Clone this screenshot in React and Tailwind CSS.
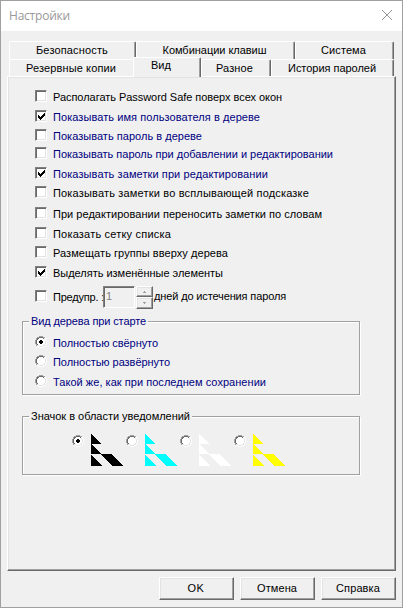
import { useLayoutEffect, useRef } from 'react';

// Text run spread to an exact width through letter spacing.
function Label({ w, className = '', children }) {
  const ref = useRef(null);
  useLayoutEffect(() => {
    const el = ref.current;
    el.style.letterSpacing = '0px';
    const natural = el.getBoundingClientRect().width;
    el.style.letterSpacing = `${(w - natural) / el.textContent.length}px`;
  }, [w]);
  return (
    <span ref={ref} className={`inline-block shrink-0 whitespace-pre ${className}`}>
      {children}
    </span>
  );
}

const sunken =
  'border border-t-[#808080] border-l-[#808080] border-b-white border-r-white';
const raised =
  'border border-t-white border-l-white border-b-[#696969] border-r-[#696969] shadow-[inset_-1px_-1px_0_#a0a0a0,inset_1px_1px_0_#e3e3e3]';

function Check({ on }) {
  return (
    <span className={`block h-3 w-3 shrink-0 bg-white ${sunken} shadow-[inset_1px_1px_0_#696969,inset_-1px_-1px_0_#e3e3e3]`}>
      {on && (
        <svg className="block h-[10px] w-[10px]" viewBox="0 0 10 10" shapeRendering="crispEdges">
          <path d="M2 4h1v1h1v1h1v-1h1v-1h1v-1h1v-1h1v3h-1v1h-1v1h-1v1h-1v1h-1v-1h-1v-1h-1z" />
        </svg>
      )}
    </span>
  );
}

function Radio({ on }) {
  return (
    <svg className="block h-3 w-3 shrink-0" viewBox="0 0 12 12" shapeRendering="crispEdges">
      <path d="M4 1h4v1h2v2h1v4h-1v2h-2v1h-4v-1h-2v-2h-1v-4h1v-2h2z" fill="#fff" />
      <path d="M4 0h4v1h-4zM2 1h2v1h-2zM8 1h2v1h-2zM1 2h1v2h-1zM0 4h1v4h-1zM1 8h1v2h-1z" fill="#a0a0a0" />
      <path d="M4 1h4v1h-4zM2 2h2v1h-2zM8 2h1v1h-1zM2 3h1v1h-1zM1 4h1v4h-1zM2 8h1v1h-1z" fill="#696969" />
      <path d="M10 2h1v2h-1zM11 4h1v4h-1zM10 8h1v2h-1zM8 10h2v1h-2zM2 10h2v1h-2zM4 11h4v1h-4z" fill="#fff" />
      <path d="M9 3h1v1h-1zM10 4h1v4h-1zM9 8h1v1h-1zM8 9h2v1h-2zM2 9h2v1h-2zM4 10h4v1h-4z" fill="#e3e3e3" />
      {on && <path d="M5 4h2v1h1v2h-1v1h-2v-1h-1v-2h1z" fill="#000" />}
    </svg>
  );
}

function Tab({ className, w, children }) {
  return (
    <div
      className={`flex h-[18px] shrink-0 justify-center rounded-t-[2px] border-t border-l border-r border-t-white border-l-white border-r-[#696969] pt-[2px] shadow-[inset_-1px_0_0_#a0a0a0] ${className}`}
    >
      <Label w={w}>{children}</Label>
    </div>
  );
}

const navy = 'text-[#000080]';
const options = [
  ['mt-[13px]', 229, 'Располагать Password Safe поверх всех окон', false, ''],
  ['mt-[8px]', 207, 'Показывать имя пользователя в дереве', true, navy],
  ['mt-[7px]', 149, 'Показывать пароль в дереве', false, navy],
  ['mt-[6px]', 280, 'Показывать пароль при добавлении и редактировании', false, navy],
  ['mt-[8px]', 215, 'Показывать заметки при редактировании', true, navy],
  ['mt-[7px]', 256, 'Показывать заметки во всплывающей подсказке', false, ''],
  ['mt-[9px]', 269, 'При редактировании переносить заметки по словам', false, ''],
  ['mt-[8px]', 118, 'Показать сетку списка', false, ''],
  ['mt-[7px]', 175, 'Размещать группы вверху дерева', false, ''],
  ['mt-[8px]', 170, 'Выделять изменённые элементы', true, ''],
];

function Group({ title, w, className, legend, children }) {
  return (
    <div className={`relative ml-[14px] w-[338px] border border-[#a0a0a0] shadow-[inset_1px_1px_0_#fff,1px_1px_0_#fff] ${className}`}>
      <span className={`absolute -top-[7px] left-[6px] flex bg-[#f0f0f0] px-[2px] ${legend}`}>
        <Label w={w}>{title}</Label>
      </span>
      {children}
    </div>
  );
}

function Arrow({ down }) {
  return (
    <div className={`flex w-[17px] items-center justify-center bg-[#f0f0f0] ${down ? 'h-[12px]' : 'h-[11px]'} ${raised}`}>
      <svg className="h-[2px] w-[3px]" viewBox="0 0 3 2" shapeRendering="crispEdges">
        <path d={down ? 'M0 0h3v1h-1v1h-1v-1h-1z' : 'M1 0h1v1h1v1h-3v-1h1z'} fill="#a0a0a0" />
      </svg>
    </div>
  );
}

export default function App() {
  return (
    <div className="flex h-[608px] w-[403px] flex-col overflow-hidden border border-[#a0a0a0] bg-[#f0f0f0] font-['Liberation_Sans',Arial,sans-serif] text-[11px] leading-[13px] text-black">
      <header className="flex h-[30px] shrink-0 justify-between bg-white pl-2 pr-[9px]">
        <Label w={61} className="pt-[7px] font-['Open_Sans','Noto_Sans',sans-serif] text-[12px] leading-[16px] text-[#999]">
          Настройки
        </Label>
        <svg className="mt-[8px] h-3 w-3" viewBox="0 0 12 12" stroke="#999" strokeWidth="1">
          <path d="M1 1l10 10M11 1L1 11" />
        </svg>
      </header>

      <div className="mt-[10px] flex h-[18px] shrink-0 pl-[8px]">
        <Tab w={72} className="w-[127px] pr-px">Безопасность</Tab>
        <Tab w={104} className="w-[159px] pr-[2px]">Комбинации клавиш</Tab>
        <Tab w={45} className="w-[99px] pr-[2px]">Система</Tab>
      </div>
      <div className="flex h-[17px] shrink-0 pl-[8px]">
        <Tab w={90} className="w-[124px] border-r-[#f0f0f0] shadow-none">Резервные копии</Tab>
        <div className="relative z-10 -mt-[2px] flex h-[20px] w-[68px] shrink-0 justify-center rounded-t-[2px] border-t border-l border-r border-t-white border-l-white border-r-[#696969] bg-[#f0f0f0] pr-[12px] pt-px shadow-[inset_-1px_0_0_#a0a0a0]">
          <Label w={20}>Вид</Label>
        </div>
        <Tab w={37} className="w-[70px] pr-[3px]">Разное</Tab>
        <Tab w={88} className="w-[123px] pr-px">История паролей</Tab>
      </div>

      <main className={`ml-[6px] flex h-[495px] w-[389px] shrink-0 flex-col ${raised}`}>
        {options.map(([gap, w, text, on, color]) => (
          <div key={text} className={`flex h-3 shrink-0 items-start pl-[27px] ${gap} ${color}`}>
            <Check on={on} />
            <Label w={w} className="ml-[6px] mt-px">{text}</Label>
          </div>
        ))}
        <div className="mt-[8px] flex h-[23px] shrink-0 items-start pl-[27px]">
          <div className="mt-[4px] flex w-[68px] overflow-hidden">
            <Check />
            <Label w={51} className="ml-[6px] mt-px">Предупр. :</Label>
          </div>
          <div className={`h-[22px] w-[32px] pl-[2px] pt-[3px] text-[#808080] ${sunken} shadow-[inset_1px_1px_0_#696969]`}>1</div>
          <div className="ml-px flex flex-col">
            <Arrow />
            <Arrow down />
          </div>
          <Label w={132} className="ml-px mt-[4px]">дней до истечения пароля</Label>
        </div>

        <Group title="Вид дерева при старте" w={115} className="mt-[12px] h-[74px] shrink-0" legend={navy}>
          <div className={`flex flex-col pl-[12px] pt-[14px] ${navy}`}>
            <div className="flex h-[19px]"><Radio on /><Label w={105} className="ml-[6px] mt-px">Полностью свёрнуто</Label></div>
            <div className="flex h-[20px]"><Radio /><Label w={117} className="ml-[6px] mt-px">Полностью развёрнуто</Label></div>
            <div className="flex h-[19px]"><Radio /><Label w={213} className="ml-[6px] mt-px">Такой же, как при последнем сохранении</Label></div>
          </div>
        </Group>

        <Group title="Значок в области уведомлений" w={159} className="mt-[21px] h-[59px] shrink-0" legend="">
          <div className="flex pl-[49px] pt-[17px]">
            {['#000', '#0ff', '#fff', '#ff0'].map((color, i) => (
              <div key={color} className="flex w-[54px] shrink-0">
                <span className="mt-px"><Radio on={i === 0} /></span>
                <svg className="ml-[7px] h-8 w-8 shrink-0" viewBox="0 0 32 32" fill={color} shapeRendering="crispEdges">
                  <path d="M0 0L10 10H0ZM0 10L10 20H21L32 32H21L10 20H0ZM0 21L11 32H0Z" />
                </svg>
              </div>
            ))}
          </div>
        </Group>
      </main>

      <footer className="mt-[6px] flex gap-[6px] pl-[158px]">
        {[['OK', 17], ['Отмена', 40], ['Справка', 44]].map(([text, w]) => (
          <button key={text} className={`flex h-[23px] w-[75px] shrink-0 justify-center pr-px pt-[4px] ${raised}`}>
            <Label w={w}>{text}</Label>
          </button>
        ))}
      </footer>
    </div>
  );
}
